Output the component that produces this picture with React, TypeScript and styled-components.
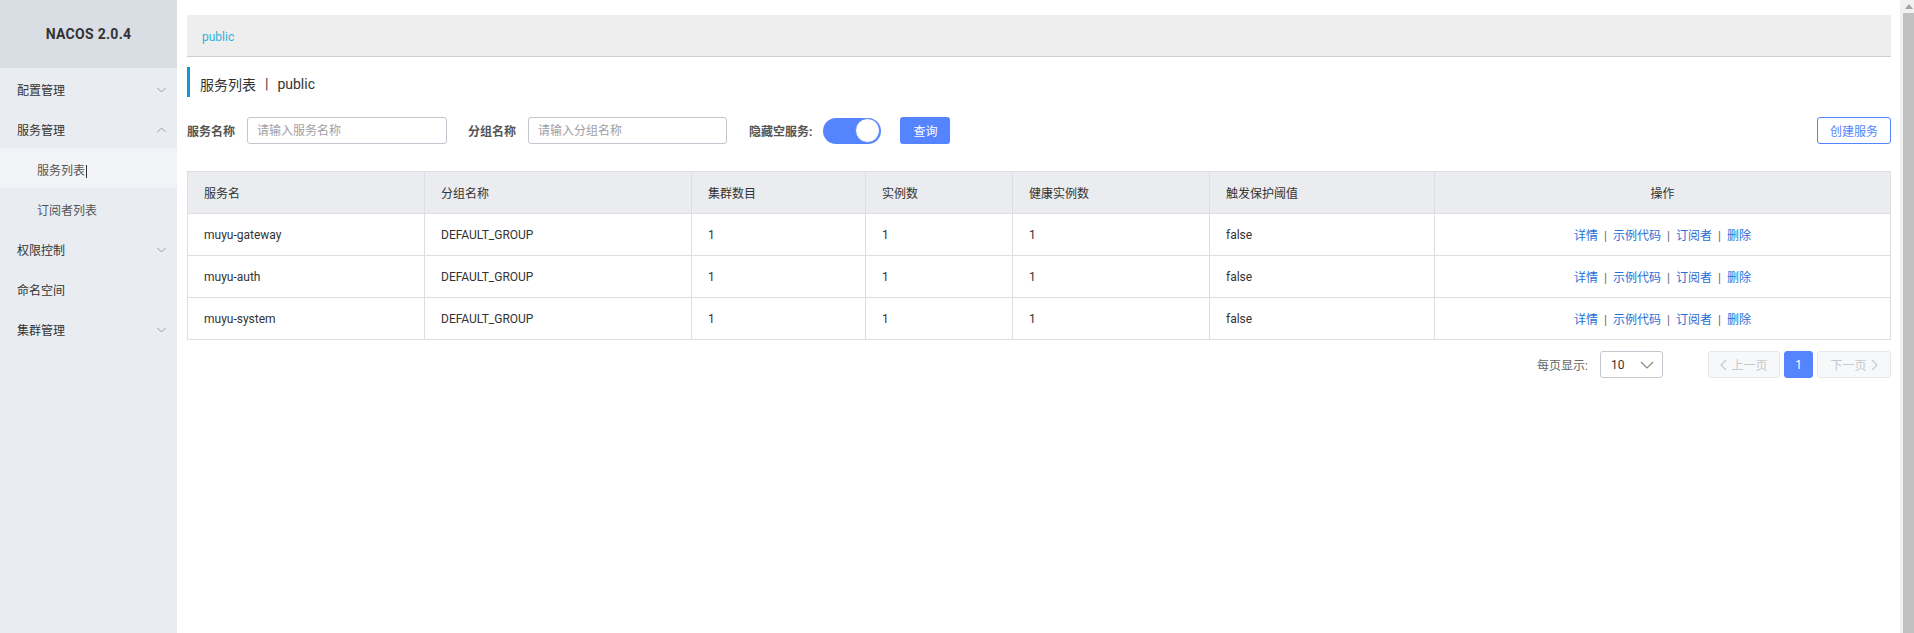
import React from "react";
import styled, { createGlobalStyle } from "styled-components";

const Global = createGlobalStyle`
  html, body { margin: 0; padding: 0; overflow: hidden; background: #fff; }
  body { font-family: Roboto, "Noto Sans CJK SC", sans-serif; font-size: 12px; color: #333; }
  * { box-sizing: border-box; }
`;

const Page = styled.div`
  display: flex;
  width: 1914px;
  height: 633px;
`;

const Sidebar = styled.aside`
  width: 177px;
  flex: none;
  background: #e9ecf1;
  display: flex;
  flex-direction: column;
`;

const Brand = styled.div`
  height: 68px;
  background: #d9dde4;
  display: flex;
  align-items: center;
  justify-content: center;
  font-weight: 700;
  font-size: 14px;
  color: #333;
  letter-spacing: 0.3px;
`;

const MenuItem = styled.div<{ $sub?: boolean; $active?: boolean }>`
  height: 40px;
  padding: 3px 11px 0 ${(p) => (p.$sub ? "37px" : "17px")};
  display: flex;
  align-items: center;
  justify-content: space-between;
  font-size: 12px;
  color: ${(p) => (p.$sub ? "#555" : "#333")};
  background: ${(p) => (p.$active ? "#f2f3f7" : "transparent")};
`;

const Caret = styled.span`
  width: 1px;
  height: 13px;
  background: #333;
  display: inline-block;
  margin-left: 1px;
  vertical-align: middle;
`;

const Chevron = ({ up }: { up?: boolean }) => (
  <svg width="9" height="6" viewBox="0 0 9 6">
    <polyline
      points={up ? "0.5,5 4.5,1 8.5,5" : "0.5,1 4.5,5 8.5,1"}
      fill="none"
      stroke="#9a9ca3"
      strokeWidth="1"
    />
  </svg>
);

const Main = styled.main`
  flex: 1;
  padding: 15px 9px 0 10px;
  display: flex;
  flex-direction: column;
`;

const Crumb = styled.div`
  height: 42px;
  background: #eeeeee;
  border-bottom: 1px solid #cfcfcf;
  padding-left: 15px;
  padding-top: 2px;
  display: flex;
  align-items: center;
  color: #33b1d9;
  font-size: 12px;
`;

const Title = styled.h2`
  margin: 10px 0 0;
  height: 30px;
  border-left: 3px solid #0f9ad3;
  padding-left: 10px;
  display: flex;
  align-items: center;
  padding-top: 4px;
  font-size: 14px;
  font-weight: 400;
  color: #333;
`;

const Sep = styled.span`
  margin: 0 9px;
`;

const SearchRow = styled.div`
  margin-top: 20px;
  display: flex;
  align-items: center;
  height: 27px;
`;

const Label = styled.span<{ $ml?: number; $mr?: number }>`
  font-weight: 700;
  color: #555;
  font-size: 12px;
  margin-left: ${(p) => p.$ml ?? 0}px;
  margin-right: ${(p) => p.$mr ?? 12}px;
`;

const Input = styled.input<{ $w: number }>`
  width: ${(p) => p.$w}px;
  height: 27px;
  border: 1px solid #c4c6cf;
  border-radius: 3px;
  padding: 0 9px;
  font-size: 12px;
  font-family: inherit;
  outline: none;
  &::placeholder { color: #a0a0a6; }
`;

const Toggle = styled.div`
  width: 58px;
  height: 26px;
  border-radius: 13px;
  background: #5584ff;
  display: flex;
  align-items: center;
  justify-content: flex-end;
  padding-right: 1px;
  margin-left: 11px;
`;

const Knob = styled.span`
  width: 25px;
  height: 25px;
  border-radius: 50%;
  background: #fff;
  border: 1px solid #5584ff;
`;

const PrimaryBtn = styled.button`
  margin-left: 19px;
  width: 50px;
  height: 27px;
  background: #5584ff;
  border: none;
  border-radius: 3px;
  color: #fff;
  font-size: 12px;
  font-family: inherit;
  padding: 0;
`;

const Spacer = styled.div`
  flex: 1;
`;

const OutlineBtn = styled.button`
  width: 74px;
  height: 27px;
  background: #fff;
  border: 1px solid #5584ff;
  border-radius: 3px;
  color: #5584ff;
  font-size: 12px;
  font-family: inherit;
  padding: 0;
`;

const Table = styled.table`
  margin-top: 27px;
  width: 1703px;
  border-collapse: collapse;
  table-layout: fixed;
`;

const Th = styled.th<{ $center?: boolean }>`
  height: 42px;
  background: #ebecf0;
  border: 1px solid #dcdee3;
  font-weight: 400;
  font-size: 12px;
  color: #333;
  text-align: ${(p) => (p.$center ? "center" : "left")};
  padding: 0 16px;
`;

const Td = styled.td<{ $center?: boolean }>`
  height: 42px;
  border: 1px solid #dcdee3;
  font-size: 12px;
  color: #333;
  text-align: ${(p) => (p.$center ? "center" : "left")};
  padding: 0 16px;
`;

const Link = styled.a`
  color: #1f6fd6;
  text-decoration: none;
`;

const LinkSep = styled.span`
  color: #666;
  margin: 0 6px;
`;

const Pager = styled.div`
  margin-top: 11px;
  display: flex;
  justify-content: flex-end;
  align-items: center;
  height: 27px;
`;

const PagerLabel = styled.span`
  color: #666;
  font-size: 12px;
  margin-right: 12px;
`;

const Select = styled.div`
  width: 63px;
  height: 27px;
  border: 1px solid #c4c6cf;
  border-radius: 3px;
  display: flex;
  align-items: center;
  justify-content: space-between;
  padding: 0 8px 0 10px;
  font-size: 12px;
  color: #333;
  margin-right: 41px;
`;

const PageBtn = styled.div<{ $w: number; $active?: boolean }>`
  width: ${(p) => p.$w}px;
  height: 27px;
  border-radius: 3px;
  display: flex;
  align-items: center;
  justify-content: center;
  gap: 4px;
  font-size: 12px;
  margin-left: 4px;
  background: ${(p) => (p.$active ? "#5584ff" : "#f7f8fa")};
  border: 1px solid ${(p) => (p.$active ? "#5584ff" : "#e6e7eb")};
  color: ${(p) => (p.$active ? "#fff" : "#c8c9cc")};
`;

const ScrollBar = styled.div`
  width: 15px;
  flex: none;
  background: #f1f1f1;
  display: flex;
  flex-direction: column;
  align-items: flex-end;
`;

const ScrollArrow = styled.div`
  height: 13px;
  width: 12px;
  display: flex;
  align-items: center;
  justify-content: center;
`;

const ScrollThumb = styled.div`
  flex: 1;
  width: 12px;
  background: #c1c1c1;
`;

const Arrow = ({ dir }: { dir: "left" | "right" | "down" }) => {
  const pts =
    dir === "left" ? "6,1 1,6 6,11" : dir === "right" ? "1,1 6,6 1,11" : "1,1 7,7 13,1";
  const w = dir === "down" ? 14 : 7;
  const h = dir === "down" ? 8 : 12;
  return (
    <svg width={w} height={h} viewBox={`0 0 ${w} ${h}`}>
      <polyline points={pts} fill="none" stroke={dir === "down" ? "#888" : "#c8c9cc"} strokeWidth="1.2" />
    </svg>
  );
};

const rows = ["muyu-gateway", "muyu-auth", "muyu-system"];
const widths = [237, 267, 174, 147, 197, 225, 456];

export default function App() {
  return (
    <>
      <Global />
      <Page>
        <Sidebar>
          <Brand>NACOS 2.0.4</Brand>
          <MenuItem>
            配置管理 <Chevron />
          </MenuItem>
          <MenuItem>
            服务管理 <Chevron up />
          </MenuItem>
          <MenuItem $sub $active>
            <span>
              服务列表
              <Caret />
            </span>
          </MenuItem>
          <MenuItem $sub>订阅者列表</MenuItem>
          <MenuItem>
            权限控制 <Chevron />
          </MenuItem>
          <MenuItem>命名空间</MenuItem>
          <MenuItem>
            集群管理 <Chevron />
          </MenuItem>
        </Sidebar>
        <Main>
          <Crumb>public</Crumb>
          <Title>
            服务列表<Sep>|</Sep>public
          </Title>
          <SearchRow>
            <Label>服务名称</Label>
            <Input $w={200} placeholder="请输入服务名称" />
            <Label $ml={21}>分组名称</Label>
            <Input $w={199} placeholder="请输入分组名称" />
            <Label $ml={22} $mr={0}>隐藏空服务:</Label>
            <Toggle>
              <Knob />
            </Toggle>
            <PrimaryBtn>查询</PrimaryBtn>
            <Spacer />
            <OutlineBtn>创建服务</OutlineBtn>
          </SearchRow>
          <Table>
            <colgroup>
              {widths.map((w, i) => (
                <col key={i} style={{ width: w }} />
              ))}
            </colgroup>
            <thead>
              <tr>
                <Th>服务名</Th>
                <Th>分组名称</Th>
                <Th>集群数目</Th>
                <Th>实例数</Th>
                <Th>健康实例数</Th>
                <Th>触发保护阈值</Th>
                <Th $center>操作</Th>
              </tr>
            </thead>
            <tbody>
              {rows.map((r) => (
                <tr key={r}>
                  <Td>{r}</Td>
                  <Td>DEFAULT_GROUP</Td>
                  <Td>1</Td>
                  <Td>1</Td>
                  <Td>1</Td>
                  <Td>false</Td>
                  <Td $center>
                    <Link>详情</Link>
                    <LinkSep>|</LinkSep>
                    <Link>示例代码</Link>
                    <LinkSep>|</LinkSep>
                    <Link>订阅者</Link>
                    <LinkSep>|</LinkSep>
                    <Link>删除</Link>
                  </Td>
                </tr>
              ))}
            </tbody>
          </Table>
          <Pager>
            <PagerLabel>每页显示:</PagerLabel>
            <Select>
              10 <Arrow dir="down" />
            </Select>
            <PageBtn $w={72}>
              <Arrow dir="left" /> 上一页
            </PageBtn>
            <PageBtn $w={29} $active>
              1
            </PageBtn>
            <PageBtn $w={74}>
              下一页 <Arrow dir="right" />
            </PageBtn>
          </Pager>
        </Main>
        <ScrollBar>
          <ScrollArrow>
            <svg width="8" height="5" viewBox="0 0 8 5">
              <polygon points="0,5 4,0 8,5" fill="#a3a3a3" />
            </svg>
          </ScrollArrow>
          <ScrollThumb />
        </ScrollBar>
      </Page>
    </>
  );
}
